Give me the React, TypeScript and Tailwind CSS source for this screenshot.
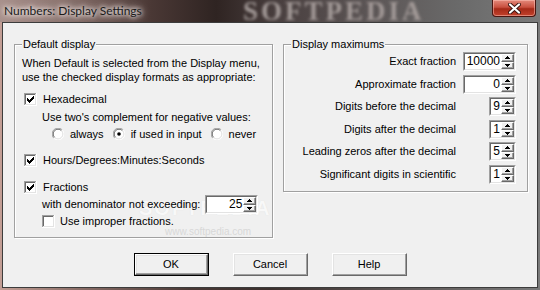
import React from "react";

const FONT = { fontFamily: '"Liberation Sans", Arial, sans-serif' };

function Check({ checked }: { checked: boolean }) {
  return (
    <svg width="13" height="13" viewBox="0 0 13 13" className="shrink-0" shapeRendering="crispEdges">
      <rect x="0" y="0" width="13" height="13" fill="#ffffff" />
      <rect x="0" y="0" width="12" height="1" fill="#a0a0a0" />
      <rect x="0" y="0" width="1" height="12" fill="#a0a0a0" />
      <rect x="1" y="1" width="10" height="1" fill="#696969" />
      <rect x="1" y="1" width="1" height="10" fill="#696969" />
      <rect x="1" y="11" width="11" height="1" fill="#e3e3e3" />
      <rect x="11" y="1" width="1" height="11" fill="#e3e3e3" />
      <rect x="0" y="12" width="13" height="1" fill="#ffffff" />
      <rect x="12" y="0" width="1" height="13" fill="#ffffff" />
      {checked && (
        <g fill="#000">
          <rect x="3" y="5" width="1" height="3" />
          <rect x="4" y="6" width="1" height="3" />
          <rect x="5" y="7" width="1" height="3" />
          <rect x="6" y="6" width="1" height="3" />
          <rect x="7" y="5" width="1" height="3" />
          <rect x="8" y="4" width="1" height="3" />
          <rect x="9" y="3" width="1" height="3" />
        </g>
      )}
    </svg>
  );
}

function Radio({ checked }: { checked: boolean }) {
  return (
    <svg width="12" height="12" viewBox="0 0 12 12" className="shrink-0">
      <circle cx="6" cy="6" r="5" fill="#ffffff" />
      <path d="M1.8 10.2 A5.5 5.5 0 0 1 10.2 1.8" fill="none" stroke="#a0a0a0" strokeWidth="1" />
      <path d="M10.2 1.8 A5.5 5.5 0 0 1 1.8 10.2" fill="none" stroke="#ffffff" strokeWidth="1" />
      <path d="M2.6 9.4 A4.5 4.5 0 0 1 9.4 2.6" fill="none" stroke="#696969" strokeWidth="1" />
      <path d="M9.4 2.6 A4.5 4.5 0 0 1 2.6 9.4" fill="none" stroke="#e3e3e3" strokeWidth="1" />
      {checked && <circle cx="6" cy="6" r="1.8" fill="#000" />}
    </svg>
  );
}

function SpinHalf({ up }: { up: boolean }) {
  return (
    <div className="flex-1 flex items-center justify-center bg-[#f0f0f0] border-t border-l border-t-white border-l-white border-b border-r border-b-[#696969] border-r-[#696969] shadow-[inset_-1px_-1px_0_#a0a0a0]">
      <svg width="5" height="3" viewBox="0 0 5 3" shapeRendering="crispEdges">
        {up ? (
          <g fill="#000">
            <rect x="2" y="0" width="1" height="1" />
            <rect x="1" y="1" width="3" height="1" />
            <rect x="0" y="2" width="5" height="1" />
          </g>
        ) : (
          <g fill="#000">
            <rect x="0" y="0" width="5" height="1" />
            <rect x="1" y="1" width="3" height="1" />
            <rect x="2" y="2" width="1" height="1" />
          </g>
        )}
      </svg>
    </div>
  );
}

function Spin({ value, wide }: { value: string; wide: boolean }) {
  return (
    <div
      className={`flex h-[19px] shrink-0 border border-t-[#a0a0a0] border-l-[#a0a0a0] border-b-white border-r-white ${wide ? "w-[53px]" : "w-[27px]"}`}
    >
      <div className="flex flex-1 border border-t-[#696969] border-l-[#696969] border-b-[#e3e3e3] border-r-[#e3e3e3] bg-white">
        <div className="flex-1 flex items-center justify-end pr-[1px] text-[12px] leading-[15px] text-black">{value}</div>
        <div className="flex flex-col w-[13px]">
          <SpinHalf up={true} />
          <SpinHalf up={false} />
        </div>
      </div>
    </div>
  );
}

function Button({ label, def }: { label: string; def?: boolean }) {
  return (
    <div className={`w-[75px] h-[23px] ${def ? "border border-black" : ""} bg-[#f0f0f0]`}>
      <div className="w-full h-full flex items-center justify-center border border-t-white border-l-white border-b-[#696969] border-r-[#696969] shadow-[inset_-1px_-1px_0_#a0a0a0,inset_1px_1px_0_#e3e3e3] text-[11px] text-black">
        {label}
      </div>
    </div>
  );
}

function GroupBox({
  label,
  className,
  children,
}: {
  label: string;
  className: string;
  children: React.ReactNode;
}) {
  return (
    <div className={`relative border border-[#a0a0a0] shadow-[inset_1px_1px_0_#fff,1px_1px_0_#fff] ${className}`}>
      <span className="absolute -top-[8px] left-[7px] px-[1px] bg-[#f0f0f0] text-[11px] leading-[14px] text-black">
        {label}
      </span>
      {children}
    </div>
  );
}

const rows = [
  { label: "Exact fraction", value: "10000", wide: true, h: "h-[23px]" },
  { label: "Approximate fraction", value: "0", wide: true, h: "h-[22px]" },
  { label: "Digits before the decimal", value: "9", wide: false, h: "h-[23px]" },
  { label: "Digits after the decimal", value: "1", wide: false, h: "h-[22px]" },
  { label: "Leading zeros after the decimal", value: "5", wide: false, h: "h-[23px]" },
  { label: "Significant digits in scientific", value: "1", wide: false, h: "h-[19px]" },
];

export default function App() {
  return (
    <div
      className="relative w-[540px] h-[290px] overflow-hidden flex flex-col bg-[linear-gradient(90deg,#c39e95_0%,#8a6d67_15%,#4a3936_35%,#3c302e_50%,#5f5857_75%,#7a7a7a_100%)]"
      style={FONT}
    >
      {/* Title bar */}
      <div className="relative h-[22px] shrink-0 flex items-center overflow-hidden bg-[linear-gradient(90deg,#a8918c_0%,#8a726d_12%,#4a3835_28%,#2f2422_40%,#4a4040_52%,#5d5757_70%,#6a6a6a_85%,#7a7a7a_100%)]">
        <span
          className="absolute left-[243px] top-[-2px] leading-none text-[27px] font-bold tracking-[3px] text-[#a39a98] blur-[1.4px]"
          style={{ fontFamily: '"Liberation Serif", serif' }}
        >
          SOFTPEDIA
        </span>
        <span
          className="relative ml-[4px] text-[12px] text-[#1a1a1a] [text-shadow:0_0_6px_#f2e6e2,0_0_10px_#e8dad6,0_0_4px_#fff]"
          style={{ fontFamily: 'Lato, "Noto Sans", sans-serif' }}
        >
          Numbers: Display Settings
        </span>
        <div className="absolute left-[492px] top-0 w-[44px] h-[17px] rounded-b-[4px] border border-[#4a1510] border-t-0 bg-[linear-gradient(180deg,#e48a7c_0%,#c9503f_45%,#a52a18_55%,#c2412c_100%)] shadow-[inset_0_0_0_1px_rgba(255,200,190,0.5)] flex items-center justify-center">
          <svg width="13" height="11" viewBox="0 0 13 11">
            <path d="M2 1.5 L11 9.5 M11 1.5 L2 9.5" stroke="#3a1410" strokeWidth="4" strokeLinecap="round" />
            <path d="M2 1.5 L11 9.5 M11 1.5 L2 9.5" stroke="#ffffff" strokeWidth="2.2" strokeLinecap="round" />
          </svg>
        </div>
      </div>

      {/* Client area */}
      <div className="relative mx-[2px] h-[266px] shrink-0 border border-[#3c3c3c] bg-[#f0f0f0] flex flex-col text-[11px] text-black">
        <span className="pointer-events-none absolute left-[136px] top-[170px] text-[20px] font-bold tracking-[2px] text-[#f8f8f8] [text-shadow:0_0_1px_#dedede]">
          SOFTPEDIA
        </span>
        <span className="pointer-events-none absolute left-[162px] top-[201px] text-[10px] text-[#d8d8d8]">
          www.softpedia.com
        </span>

        <div className="relative flex items-start mt-[21px] ml-[11px] gap-[10px]">
          <GroupBox label="Default display" className="w-[259px] h-[194px]">
            <div className="flex flex-col">
              <div className="mt-[11px] ml-[7px] leading-[14px]">
                <div>When Default is selected from the Display menu,</div>
                <div>use the checked display formats as appropriate:</div>
              </div>
              <div className="mt-[8px] ml-[9px] h-[14px] flex items-center gap-[6px]">
                <Check checked={true} />
                <span>Hexadecimal</span>
              </div>
              <div className="mt-[4px] ml-[27px] h-[14px] flex items-center">
                Use two's complement for negative values:
              </div>
              <div className="mt-[3px] ml-[37px] h-[14px] flex items-center gap-[9px]">
                <div className="flex items-center gap-[6px]">
                  <Radio checked={false} />
                  <span>always</span>
                </div>
                <div className="flex items-center gap-[6px]">
                  <Radio checked={true} />
                  <span>if used in input</span>
                </div>
                <div className="flex items-center gap-[6px]">
                  <Radio checked={false} />
                  <span>never</span>
                </div>
              </div>
              <div className="mt-[12px] ml-[9px] h-[14px] flex items-center gap-[6px]">
                <Check checked={true} />
                <span>Hours/Degrees:Minutes:Seconds</span>
              </div>
              <div className="mt-[13px] ml-[9px] h-[14px] flex items-center gap-[6px]">
                <Check checked={true} />
                <span>Fractions</span>
              </div>
              <div className="mt-[1px] ml-[27px] h-[19px] flex items-center gap-[5px]">
                <span>with denominator not exceeding:</span>
                <Spin value="25" wide={true} />
              </div>
              <div className="ml-[27px] h-[14px] flex items-center gap-[5px]">
                <Check checked={false} />
                <span>Use improper fractions.</span>
              </div>
            </div>
          </GroupBox>

          <GroupBox label="Display maximums" className="w-[245px] h-[148px]">
            <div className="flex flex-col mt-[7px] pr-[11px]">
              {rows.map((r) => (
                <div key={r.label} className={`${r.h} flex items-start justify-end`}>
                  <span className="h-[19px] flex items-center">{r.label}</span>
                  <div className="w-[53px] ml-[7px] flex justify-end">
                    <Spin value={r.value} wide={r.wide} />
                  </div>
                </div>
              ))}
            </div>
          </GroupBox>
        </div>

        <div className="mt-[15px] flex justify-center gap-[24px]">
          <Button label="OK" def={true} />
          <Button label="Cancel" />
          <Button label="Help" />
        </div>
      </div>
    </div>
  );
}
